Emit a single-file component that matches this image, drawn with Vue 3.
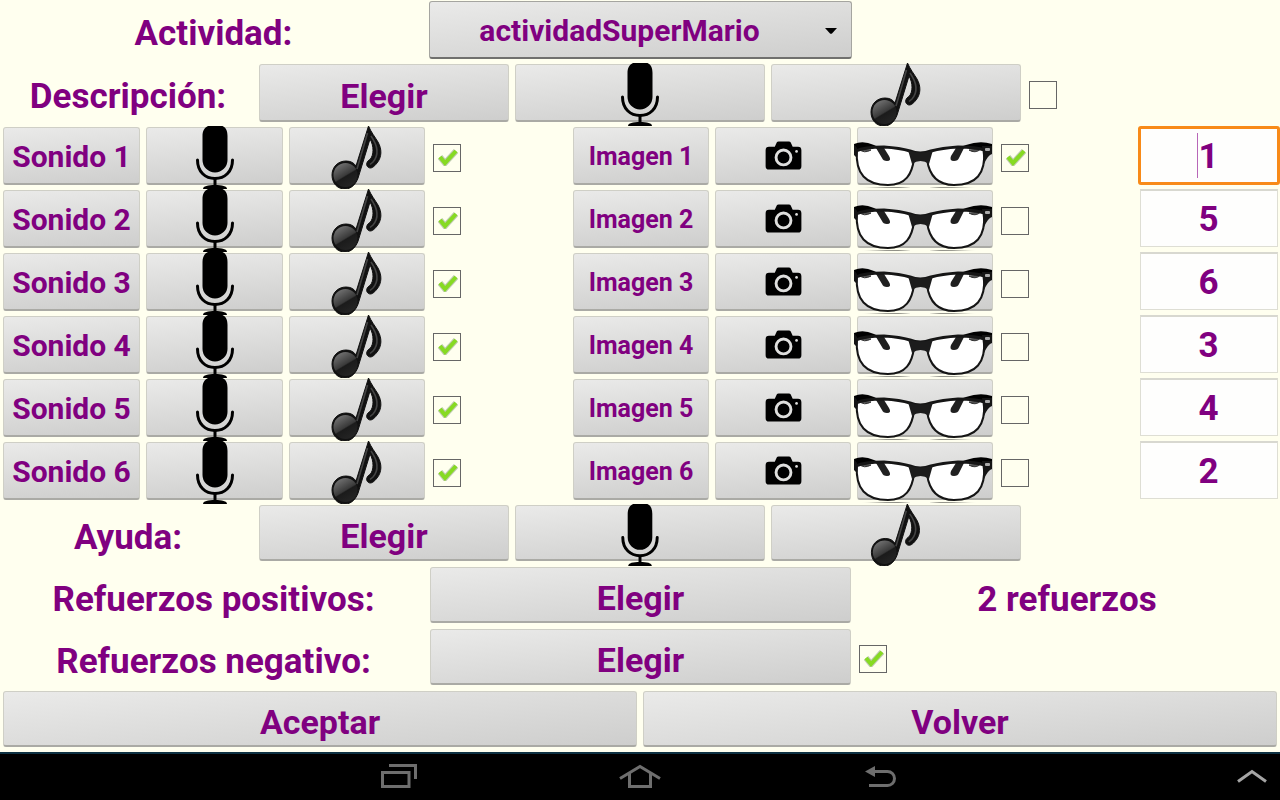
<script setup>
import { ref, reactive } from 'vue'

const activity = ref('actividadSuperMario')
const describe = ref(false)
const negative = ref(true)
const rows = reactive([
  { id: 1, sound: true, image: true, value: '1' },
  { id: 2, sound: true, image: false, value: '5' },
  { id: 3, sound: true, image: false, value: '6' },
  { id: 4, sound: true, image: false, value: '3' },
  { id: 5, sound: true, image: false, value: '4' },
  { id: 6, sound: true, image: false, value: '2' }
])
</script>

<template>
  <svg class="defs" aria-hidden="true">
    <defs>
      <linearGradient id="noteHead" x1="0.2" y1="0" x2="0.8" y2="1">
        <stop offset="0" stop-color="#777" />
        <stop offset="0.5" stop-color="#3a3a3a" />
        <stop offset="0.55" stop-color="#1b1b1b" />
        <stop offset="1" stop-color="#262626" />
      </linearGradient>
      <linearGradient id="lensShade" x1="0" y1="0" x2="1" y2="0">
        <stop offset="0" stop-color="#000" stop-opacity="0" />
        <stop offset="0.5" stop-color="#000" stop-opacity="0.9" />
        <stop offset="1" stop-color="#000" stop-opacity="0" />
      </linearGradient>
      <symbol id="mic" viewBox="0 0 40 63">
        <path d="M7.500 10C7.500 5 9.500 1.500 13 0H27.500C31 1.500 32.500 5 32.500 10V34A12.500 12.500 0 0 1 7.500 34Z" fill="#000" />
        <path d="M2.500 34C2.500 46 10.500 52.500 20 52.500S37.500 46 37.500 34" fill="none" stroke="#000" stroke-width="3" stroke-linecap="round" />
        <path d="M20 52V60" stroke="#000" stroke-width="3" />
        <path d="M8 63C8 60 13 59 20 59S32 60 32 63Z" fill="#000" />
      </symbol>
      <symbol id="note" viewBox="0 0 52 63">
        <path d="M37.500 0C40 6 44 11 47 16C51 23 51 31 46 37C43 41 40 43 37.500 41.500C34 39 36 35 39 33.500C43 29 43 20 39 13L28 49C26 57 21 63 14 63C6 63 1 57 1 49C1 41 7 35 15 35C20 35 23 37 25 40Z" fill="#111" stroke="#111" />
        <circle cx="14.500" cy="49" r="12" fill="url(#noteHead)" />
        <path d="M36.500 7L26 43M40 10C47 20 48 29 42 36L39 38.500" fill="none" stroke="#444" stroke-width="1.600" />
      </symbol>
      <symbol id="camera" viewBox="0 0 38 30">
        <path d="M4 6H10L12 1.500Q12.500 0.500 14 0.500H24.500Q26 0.500 26.500 1.500L28.500 6H34Q37.500 6 37.500 9.500V26Q37.500 29.500 34 29.500H4Q0.500 29.500 0.500 26V9.500Q0.500 6 4 6Z" fill="#000" />
        <circle cx="19" cy="17" r="7.700" fill="none" stroke="#dededd" stroke-width="3" />
        <circle cx="32.500" cy="10.800" r="1.400" fill="#dededd" />
      </symbol>
      <symbol id="glasses" viewBox="0 -16 138 63">
        <path d="M3 10C14 4 46 5 59 11C61 26 54 43 34 43C12 43 2 34 3 10Z" fill="#fff" />
        <path d="M130 10C122 4 90 5 74 11C72 26 80 43 100 43C122 43 131 34 130 10Z" fill="#fff" />
        <path d="M22 6H30L35 14Q38 19 33 19Q29 19 28 16Z" fill="#202020" />
        <path d="M110 6H102L97 14Q95 19 100 19Q104 19 105 16Z" fill="#202020" />
        <path d="M5 7Q10 12 17 8ZM115 8Q121 12 127 7Z" fill="#555" stroke="#333" />
        <path d="M0 2Q9-2 20 3L24 5Q10 6 4 9L0 8ZM138 2Q126-2 112 3L106 5Q122 6 130 9L138 8Z" fill="#000" />
        <path d="M2 9Q10 5 30 5Q46 6 56 9Q66 13 77 9Q88 6 104 5Q122 5 131 8" fill="none" stroke="#151515" stroke-width="3" />
        <path d="M3 8C1 32 12 43 34 43C52 43 58 32 60 17Q60 11 55 9M130 8C132 32 122 43 100 43C82 43 75 32 73 17Q73 11 78 9" fill="none" stroke="#151515" stroke-width="2" />
        <path d="M54 8Q66 13 79 8L75 22Q71 19 66.500 19Q62 19 58 22Z" fill="#1c1c1c" />
        <path d="M0 2V13L3 16V6ZM128 4H138V12Q134 13 130 22Z" fill="#151515" />
        <rect x="131" y="6" width="5" height="3" rx="1" fill="#aaa" />
        <path d="M7 46Q31 44 57 46ZM75 46Q99 44 123 46Z" fill="url(#lensShade)" />
      </symbol>
    </defs>
  </svg>

  <div class="screen">
    <main class="form">
      <div class="row three">
        <label class="title" for="activity">Actividad:</label>
        <div class="cell wide">
          <select id="activity" v-model="activity" class="key spinner">
            <option>actividadSuperMario</option>
          </select>
          <svg class="arrow" viewBox="0 0 12 6" aria-hidden="true"><path d="M0 0H12L7 5.500Q6 6 5 5.500Z" /></svg>
        </div>
      </div>

      <div class="row five">
        <span class="title">Descripción:</span>
        <div class="cell"><button class="key big">Elegir</button></div>
        <div class="cell"><button class="key" aria-label="Grabar descripción"><svg class="mic"><use href="#mic" /></svg></button></div>
        <div class="cell"><button class="key" aria-label="Escuchar descripción"><svg class="note"><use href="#note" /></svg></button></div>
        <label class="tick"><input v-model="describe" type="checkbox" aria-label="Usar descripción"><svg viewBox="0 0 20 18"><path d="M2 9L7 15L18 3" /><path d="M2 9L7 15L18 3" /></svg></label>
      </div>

      <div v-for="row in rows" :key="row.id" class="row nine">
        <div class="cell"><button class="key sound">Sonido {{ row.id }}</button></div>
        <div class="cell"><button class="key" :aria-label="`Grabar sonido ${row.id}`"><svg class="mic"><use href="#mic" /></svg></button></div>
        <div class="cell"><button class="key" :aria-label="`Escuchar sonido ${row.id}`"><svg class="note"><use href="#note" /></svg></button></div>
        <label class="tick"><input v-model="row.sound" type="checkbox" :aria-label="`Usar sonido ${row.id}`"><svg viewBox="0 0 20 18"><path d="M2 9L7 15L18 3" /><path d="M2 9L7 15L18 3" /></svg></label>
        <div class="cell"><button class="key image">Imagen {{ row.id }}</button></div>
        <div class="cell"><button class="key" :aria-label="`Fotografiar imagen ${row.id}`"><svg class="camera"><use href="#camera" /></svg></button></div>
        <div class="cell"><button class="key" :aria-label="`Ver imagen ${row.id}`"><svg class="glasses"><use href="#glasses" /></svg></button></div>
        <label class="tick"><input v-model="row.image" type="checkbox" :aria-label="`Usar imagen ${row.id}`"><svg viewBox="0 0 20 18"><path d="M2 9L7 15L18 3" /><path d="M2 9L7 15L18 3" /></svg></label>
        <div class="entry" :class="{ active: row.id === 1 }">
          <input v-model="row.value" type="text" inputmode="numeric" :aria-label="`Orden ${row.id}`">
        </div>
      </div>

      <div class="row five low">
        <span class="title">Ayuda:</span>
        <div class="cell"><button class="key big">Elegir</button></div>
        <div class="cell"><button class="key" aria-label="Grabar ayuda"><svg class="mic"><use href="#mic" /></svg></button></div>
        <div class="cell"><button class="key" aria-label="Escuchar ayuda"><svg class="note"><use href="#note" /></svg></button></div>
      </div>

      <div class="row three low">
        <span class="title">Refuerzos positivos:</span>
        <div class="cell"><button class="key big">Elegir</button></div>
        <span class="title">2 refuerzos</span>
      </div>

      <div class="row three low">
        <span class="title">Refuerzos negativo:</span>
        <div class="cell"><button class="key big">Elegir</button></div>
        <label class="tick"><input v-model="negative" type="checkbox" aria-label="Usar refuerzo negativo"><svg viewBox="0 0 20 18"><path d="M2 9L7 15L18 3" /><path d="M2 9L7 15L18 3" /></svg></label>
      </div>

      <div class="row two low">
        <div class="cell"><button class="key big">Aceptar</button></div>
        <div class="cell"><button class="key big">Volver</button></div>
      </div>
    </main>

    <nav class="bar" aria-label="Sistema">
      <div class="middle">
        <button aria-label="Recientes"><svg width="36" height="24" viewBox="0 0 36 24"><path d="M1.500 8.500H28V22.500H1.500ZM8 1.500H34.500V15" stroke-width="3" /></svg></button>
        <button aria-label="Inicio"><svg width="42" height="24" viewBox="0 0 42 24"><path d="M1 14.500L21 2.500L41 14.500M10.500 9.500V22.500H31.500V9.500" stroke-width="3" /></svg></button>
        <button aria-label="Atrás"><svg width="36" height="24" viewBox="-2 0 36 24"><path d="M7 7.500H22.500A7 7 0 0 1 22.500 21.500H4" stroke-width="3" /><path class="solid" d="M0 7.500L10 2V13Z" /></svg></button>
      </div>
      <button class="up" aria-label="Mostrar"><svg width="30" height="14" viewBox="0 0 30 14"><path d="M1 12.500L15 2.500L29 12.500" stroke-width="3" /></svg></button>
    </nav>
  </div>
</template>

<style>
body {
  background: #ffffef;
}
</style>

<style scoped>
.defs {
  position: absolute;
  width: 0;
  height: 0;
}
.screen {
  display: flex;
  flex-direction: column;
  min-height: 100vh;
  color: #800080;
  font-family: Roboto, sans-serif;
  font-weight: 700;
  overflow-x: hidden;
}
.form {
  flex: 1;
  display: flex;
  flex-direction: column;
}
.row {
  flex: 1 0 63px;
  display: grid;
}
.low { flex-basis: 62px; }
.two { grid-template-columns: repeat(2, minmax(0, 1fr)); }
.three { grid-template-columns: repeat(2, minmax(0, 427fr)) minmax(0, 426fr); }
.five { grid-template-columns: repeat(5, minmax(0, 1fr)); }
.nine { grid-template-columns: repeat(2, minmax(0, 143fr)) repeat(7, minmax(0, 142fr)); }
.title {
  display: flex;
  align-items: center;
  justify-content: center;
  padding-top: 4px;
  font-size: 35px;
  line-height: 40px;
  white-space: nowrap;
}
.low .title { padding-top: 6px; }
.cell {
  position: relative;
  display: flex;
  padding: 1px 3px 4px;
}
.low .cell { padding-bottom: 5px; }
.wide { padding: 1px 2px 4px; }
.key {
  flex: 1;
  min-width: 0;
  display: flex;
  align-items: center;
  justify-content: center;
  padding: 0;
  border: 1px solid #cfcfc6;
  border-bottom: 2px solid #aaaaa5;
  border-radius: 3px;
  background: linear-gradient(175deg, #eaeae9, #dcdcdb 50%, #cececd);
  color: inherit;
  font: inherit;
  white-space: nowrap;
}
.key svg {
  flex: none;
}
.big {
  padding-top: 7px;
  font-size: 34px;
  line-height: 40px;
}
.sound { padding-top: 2px; font-size: 30px; }
.image { padding-top: 2px; font-size: 25px; }
.spinner {
  appearance: none;
  padding-top: 2px;
  padding-right: 42px;
  border-color: #a5a5a0;
  border-bottom-color: #70706e;
  font-size: 30px;
  text-align: center;
  text-align-last: center;
}
.arrow {
  position: absolute;
  right: 17px;
  top: 28px;
  width: 12px;
  height: 6px;
  pointer-events: none;
}
.mic,
.note,
.glasses {
  height: 63px;
  margin: -6px 0 -10px;
}
.mic { width: 40px; }
.note { width: 52px; }
.low .mic,
.low .note { height: 62px; }
.camera { width: 37px; height: 29px; }
.glasses {
  width: 138px;
  margin-right: 2px;
  margin-left: -2px;
}
.tick {
  position: relative;
  display: flex;
  align-items: center;
  justify-self: start;
  padding-left: 5px;
}
.tick input {
  appearance: none;
  width: 28px;
  height: 28px;
  margin: 0;
  border: 1px solid #666;
}
.tick svg {
  display: none;
  position: absolute;
  left: 10px;
  width: 20px;
  height: 18px;
  margin-bottom: 2px;
  fill: none;
  stroke: #bfcbb2;
  stroke-width: 6;
  pointer-events: none;
}
.tick path + path { stroke: #86da22; stroke-width: 4; }
.tick input:checked + svg { display: block; }
.entry {
  position: relative;
  display: flex;
  padding: 0 2px 5px;
}
.entry input {
  flex: 1;
  min-width: 0;
  padding: 2px 1px 0 0;
  border: 1px solid #deded4;
  border-top: 2px solid #d8d8d0;
  outline: 0;
  background: #fefefd;
  color: inherit;
  font: inherit;
  font-size: 35px;
  text-align: center;
}
.active { padding: 0 0 4px; }
.active input {
  border: 3px solid #f88a18;
  border-radius: 3px;
}
.active::after {
  content: "";
  position: absolute;
  left: calc(50% - 12px);
  top: 7px;
  width: 1px;
  height: 45px;
  background: #b866b8;
}
.bar {
  position: relative;
  display: flex;
  align-items: center;
  justify-content: center;
  height: 44px;
  padding-bottom: 2px;
  border-top: 2px solid #0d3142;
  background: #000;
}
.bar button {
  display: flex;
  padding: 0;
  border: 0;
  background: none;
}
.bar path { fill: none; stroke: #6e6e6e; }
.bar .solid { fill: #6e6e6e; stroke: none; }
.middle {
  display: flex;
  gap: 202px;
}
.bar .up {
  position: absolute;
  right: 13px;
}
.bar .up path { stroke: #a5a5a5; }
</style>
